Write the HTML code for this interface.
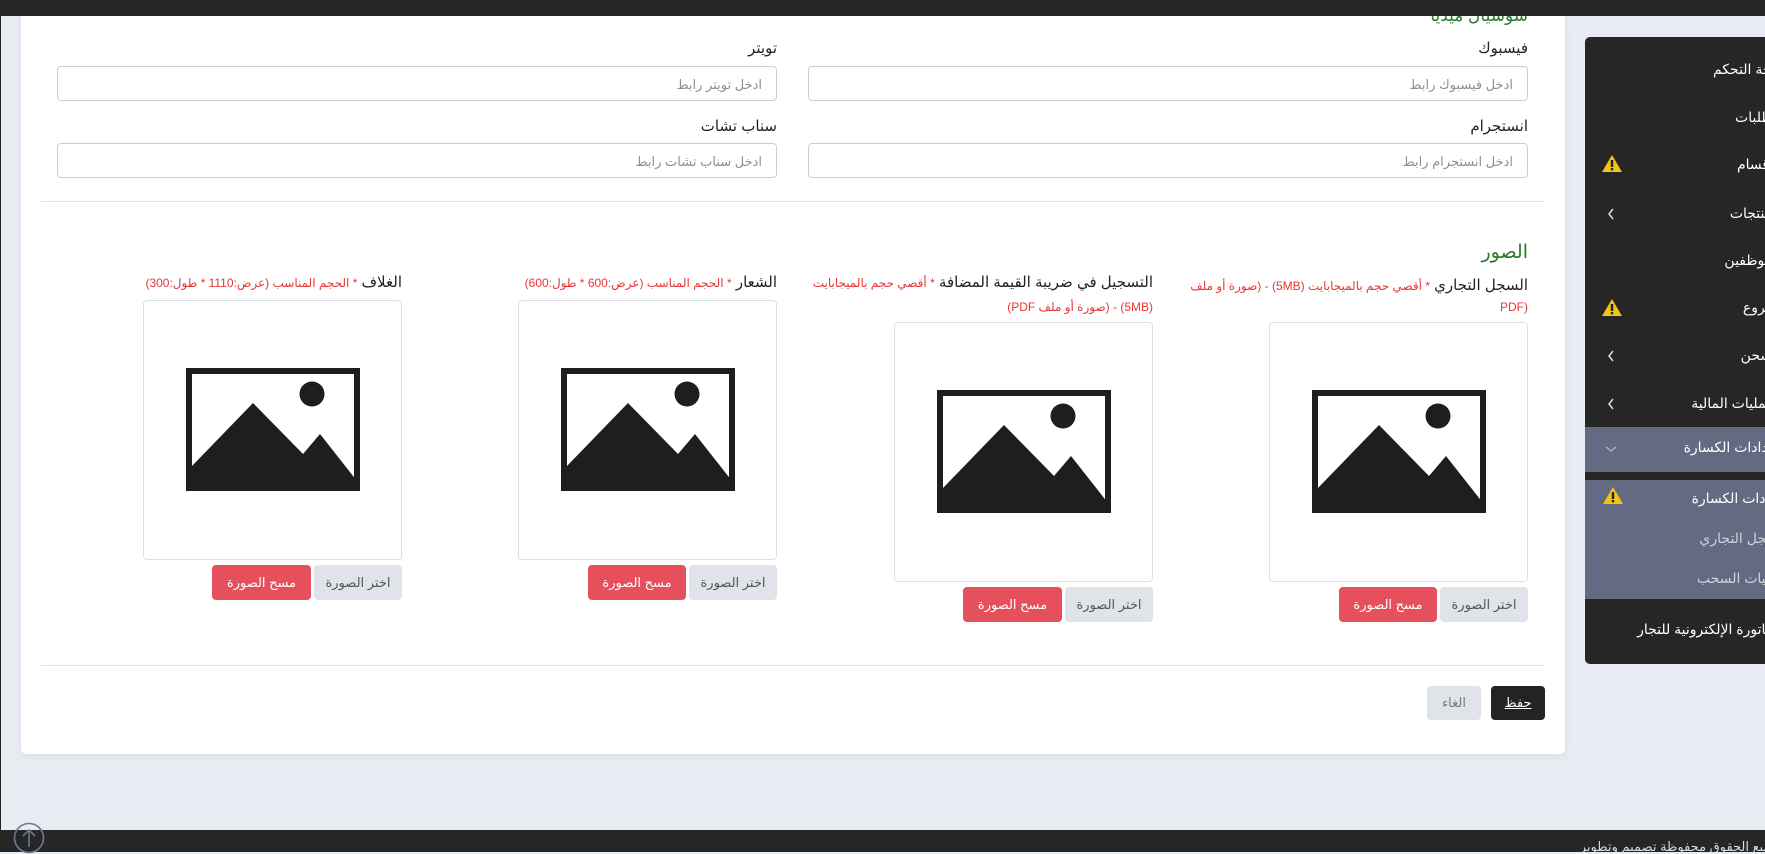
<!DOCTYPE html>
<html><head><meta charset="utf-8"><style>
*{box-sizing:border-box;margin:0;padding:0}
body{width:1765px;height:852px;overflow:hidden;background:#e8ebf2;font-family:"Liberation Sans","DejaVu Sans",sans-serif;position:relative;direction:rtl}
.a{position:absolute}
.top{left:0;top:0;width:1765px;height:16px;background:#262626}
.card{left:21px;top:16px;width:1544px;height:738px;background:#fff;border-radius:0 0 5px 5px;box-shadow:0 2px 8px rgba(0,0,0,.06)}
.lbl{font-size:15px;color:#222;white-space:nowrap}
.inp{border:1px solid #c9ced9;border-radius:4px;height:35px;font-size:13px;color:#8a8f99;padding:10px 14px 0 0;text-align:right}
.hr{height:1px;background:#dfe1e5}
.box{border:1px solid #dcdfe4;border-radius:4px;width:259px;height:260px;background:#fff}
.btn{height:35px;border-radius:4px;font-size:13px;text-align:center;line-height:35px}
.g{background:#e0e4ea;color:#555}
.r{background:#e6505d;color:#fff}
.red{color:#e73636;font-size:12px}
.side{left:1585px;top:37px;width:190px;height:627px;background:#262626;border-radius:5px 0 0 5px;overflow:hidden}
.it{position:absolute;right:0;white-space:nowrap;font-size:14px;color:#fff}
.warn{position:absolute;left:16px}
.chev{position:absolute;left:22px}
</style></head><body>
<div class="a top"></div>
<div class="a" style="left:0;top:16px;width:1px;height:814px;background:#222"></div>
<div class="a card"></div>
<div class="a" style="right:237px;top:6px;font-size:17px;color:#2b7a2b;clip-path:inset(10px 0 0 0)">سوشيال ميديا</div>
<div class="a lbl" style="right:237px;top:39px">فيسبوك</div>
<div class="a lbl" style="right:988px;top:39px">تويتر</div>
<div class="a inp" style="left:808px;top:66px;width:720px">ادخل فيسبوك رابط</div>
<div class="a inp" style="left:57px;top:66px;width:720px">ادخل تويتر رابط</div>
<div class="a lbl" style="right:237px;top:117px">انستجرام</div>
<div class="a lbl" style="right:988px;top:117px">سناب تشات</div>
<div class="a inp" style="left:808px;top:143px;width:720px">ادخل انستجرام رابط</div>
<div class="a inp" style="left:57px;top:143px;width:720px">ادخل سناب تشات رابط</div>
<div class="a hr" style="left:41px;top:201px;width:1504px"></div>
<div class="a" style="right:237px;top:241px;font-size:19px;color:#2b7a2b">الصور</div>

<div class="a lbl" style="right:237px;top:276px;font-size:15px">السجل التجاري <span class="red">* أقصي حجم بالميجابايت (5MB) - (صورة أو ملف</span></div>
<div class="a red" style="right:237px;top:300px">(PDF</div>
<div class="a lbl" style="right:612px;top:273px">التسجيل في ضريبة القيمة المضافة <span class="red">* أقصي حجم بالميجابايت</span></div>
<div class="a red" style="right:612px;top:300px">(5MB) - (صورة أو ملف PDF)</div>
<div class="a lbl" style="right:988px;top:273px">الشعار <span class="red">* الحجم المناسب (عرض:600 * طول:600)</span></div>
<div class="a lbl" style="right:1363px;top:273px">الغلاف <span class="red">* الحجم المناسب (عرض:1110 * طول:300)</span></div>

<svg width="0" height="0" style="position:absolute"><defs><g id="ic"><rect x="3" y="3" width="168" height="117" fill="none" stroke="#1e1e1e" stroke-width="6"/><circle cx="126" cy="26" r="12.5" fill="#1e1e1e"/><path d="M5 99 L67 35 L117 86 L134 66 L171 113 L171 123 L5 123Z" fill="#1e1e1e"/></g></defs></svg>

<div class="a box" style="left:1269px;top:322px"><svg class="a" style="left:42px;top:67px" width="174" height="123"><use href="#ic"/></svg></div>
<div class="a box" style="left:894px;top:322px"><svg class="a" style="left:42px;top:67px" width="174" height="123"><use href="#ic"/></svg></div>
<div class="a box" style="left:518px;top:300px"><svg class="a" style="left:42px;top:67px" width="174" height="123"><use href="#ic"/></svg></div>
<div class="a box" style="left:143px;top:300px"><svg class="a" style="left:42px;top:67px" width="174" height="123"><use href="#ic"/></svg></div>

<div class="a btn g" style="left:1440px;top:587px;width:88px">اختر الصورة</div>
<div class="a btn r" style="left:1339px;top:587px;width:98px">مسح الصورة</div>
<div class="a btn g" style="left:1065px;top:587px;width:88px">اختر الصورة</div>
<div class="a btn r" style="left:963px;top:587px;width:99px">مسح الصورة</div>
<div class="a btn g" style="left:689px;top:565px;width:88px">اختر الصورة</div>
<div class="a btn r" style="left:588px;top:565px;width:98px">مسح الصورة</div>
<div class="a btn g" style="left:314px;top:565px;width:88px">اختر الصورة</div>
<div class="a btn r" style="left:212px;top:565px;width:99px">مسح الصورة</div>

<div class="a hr" style="left:41px;top:665px;width:1504px"></div>
<div class="a btn" style="left:1491px;top:686px;width:54px;height:34px;line-height:34px;background:#232323;color:#fff;text-decoration:underline">حفظ</div>
<div class="a btn g" style="left:1427px;top:686px;width:54px;height:34px;line-height:34px;color:#777">الغاء</div>

<div class="a side">
<div class="it" style="top:24px;right:-8px">لوحة التحكم</div>
<div class="it" style="top:72px;right:-6px">الطلبات</div>
<div class="it" style="top:119px;right:-6px">الأقسام</div><svg class="warn" style="top:117px" width="22" height="19"><path d="M11 1 L21 18 L1 18Z" fill="#f2c40f"/><rect x="9.8" y="6" width="2.4" height="7" fill="#222"/><rect x="9.8" y="14" width="2.4" height="2.4" fill="#222"/></svg>
<div class="it" style="top:168px;right:-6px">المنتجات</div><svg class="chev" style="top:171px" width="8" height="12"><path d="M6 1 L2 6 L6 11" fill="none" stroke="#ddd" stroke-width="1.5"/></svg>
<div class="it" style="top:215px;right:-6px">الموظفين</div>
<div class="it" style="top:262px;right:-6px">الفروع</div><svg class="warn" style="top:261px" width="22" height="19"><path d="M11 1 L21 18 L1 18Z" fill="#f2c40f"/><rect x="9.8" y="6" width="2.4" height="7" fill="#222"/><rect x="9.8" y="14" width="2.4" height="2.4" fill="#222"/></svg>
<div class="it" style="top:310px;right:-6px">الشحن</div><svg class="chev" style="top:313px" width="8" height="12"><path d="M6 1 L2 6 L6 11" fill="none" stroke="#ddd" stroke-width="1.5"/></svg>
<div class="it" style="top:358px;right:-6px">العمليات المالية</div><svg class="chev" style="top:361px" width="8" height="12"><path d="M6 1 L2 6 L6 11" fill="none" stroke="#ddd" stroke-width="1.5"/></svg>
<div style="position:absolute;left:0;top:390px;width:190px;height:45px;background:#636a82"></div>
<div class="it" style="top:402px;right:-6px">إعدادات الكسارة</div><svg class="chev" style="top:408px;left:20px" width="12" height="8"><path d="M1 2 L6 6 L11 2" fill="none" stroke="#bbb" stroke-width="1.2"/></svg>
<div style="position:absolute;left:0;top:443px;width:190px;height:119px;background:#636a82"></div>
<div class="it" style="top:453px;right:-14px">إعدادات الكسارة</div><svg class="warn" style="top:449px;left:17px" width="22" height="19"><path d="M11 1 L21 18 L1 18Z" fill="#f2c40f"/><rect x="9.8" y="6" width="2.4" height="7" fill="#222"/><rect x="9.8" y="14" width="2.4" height="2.4" fill="#222"/></svg>
<div class="it" style="top:493px;right:-12px;color:#cfd2db">السجل التجاري</div>
<div class="it" style="top:533px;right:-12px;color:#cfd2db">عمليات السحب</div>
<div class="it" style="top:584px;right:-6px">الفاتورة الإلكترونية للتجار</div>
</div>

<div class="a" style="left:0;top:830px;width:1765px;height:22px;background:#262626;overflow:hidden"><div class="a" style="right:-14px;top:9px;color:#ddd;font-size:13px;white-space:nowrap">جميع الحقوق محفوظة تصميم وتطوير</div></div>
<svg class="a" style="left:13px;top:822px" width="32" height="32"><circle cx="16" cy="16" r="14.5" fill="none" stroke="#6b7a90" stroke-width="1.6"/><path d="M16 25 V8 M10 14 L16 8 L22 14" fill="none" stroke="#6b7a90" stroke-width="1.6"/></svg>
</body></html>
